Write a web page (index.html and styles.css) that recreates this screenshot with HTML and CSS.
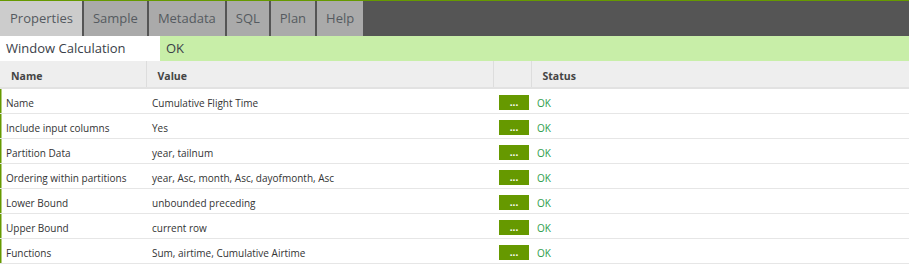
FILE: index.html
```html
<!DOCTYPE html>
<html lang="en">
<head>
    <meta charset="UTF-8">
    <title>Window Calculation</title>
    <link rel="stylesheet" href="styles.css">
</head>
<body>
    <div class="panel">
        <div class="tabs">
            <div class="tab active">Properties</div>
            <div class="tab">Sample</div>
            <div class="tab">Metadata</div>
            <div class="tab">SQL</div>
            <div class="tab">Plan</div>
            <div class="tab">Help</div>
        </div>

        <div class="title-row">
            <div class="title">Window Calculation</div>
            <div class="title-status">OK</div>
        </div>

        <table class="props">
            <colgroup>
                <col class="col-name">
                <col class="col-value">
                <col class="col-edit">
                <col>
            </colgroup>
            <thead>
                <tr>
                    <th>Name</th>
                    <th>Value</th>
                    <th></th>
                    <th>Status</th>
                </tr>
            </thead>
            <tbody>
                <tr>
                    <td>Name</td>
                    <td>Cumulative Flight Time</td>
                    <td class="btn-cell"><button class="edit">...</button></td>
                    <td class="ok">OK</td>
                </tr>
                <tr>
                    <td>Include input columns</td>
                    <td>Yes</td>
                    <td class="btn-cell"><button class="edit">...</button></td>
                    <td class="ok">OK</td>
                </tr>
                <tr>
                    <td>Partition Data</td>
                    <td>year, tailnum</td>
                    <td class="btn-cell"><button class="edit">...</button></td>
                    <td class="ok">OK</td>
                </tr>
                <tr>
                    <td>Ordering within partitions</td>
                    <td>year, Asc, month, Asc, dayofmonth, Asc</td>
                    <td class="btn-cell"><button class="edit">...</button></td>
                    <td class="ok">OK</td>
                </tr>
                <tr>
                    <td>Lower Bound</td>
                    <td>unbounded preceding</td>
                    <td class="btn-cell"><button class="edit">...</button></td>
                    <td class="ok">OK</td>
                </tr>
                <tr>
                    <td>Upper Bound</td>
                    <td>current row</td>
                    <td class="btn-cell"><button class="edit">...</button></td>
                    <td class="ok">OK</td>
                </tr>
                <tr>
                    <td>Functions</td>
                    <td>Sum, airtime, Cumulative Airtime</td>
                    <td class="btn-cell"><button class="edit">...</button></td>
                    <td class="ok">OK</td>
                </tr>
            </tbody>
        </table>
    </div>
</body>
</html>
```

FILE: styles.css
```css
body {
    margin: 0;
    font-family: 'Open Sans', 'Liberation Sans', sans-serif;
    background-color: #ffffff;
    color: #333333;
}

.panel {
    border-top: 1px solid #669900;
}

.tabs {
    display: flex;
    height: 35px;
    background-color: #555555;
}

.tab {
    display: flex;
    align-items: center;
    padding: 0 9px 1px;
    margin-right: 2px;
    background-color: #aaaaaa;
    color: #555a60;
    font-size: 13px;
}

.tab.active {
    padding-left: 10px;
    background-color: #cccccc;
}

.title-row {
    display: flex;
    height: 25px;
    font-size: 13px;
    line-height: 25px;
}

.title {
    width: 154px;
    padding-left: 6px;
    color: #3a4048;
    background-color: #ffffff;
}

.title-status {
    flex: 1;
    padding-left: 6px;
    background-color: #c8eea8;
    color: #3a4048;
}

.props {
    width: 100%;
    border-collapse: collapse;
    table-layout: fixed;
    font-size: 10px;
}

.col-name {
    width: 146px;
}

.col-value {
    width: 347px;
}

.col-edit {
    width: 38px;
}

.props th {
    height: 23px;
    padding: 3px 11px 0;
    text-align: left;
    font-size: 10.5px;
    font-weight: 700;
    color: #444444;
    background-color: #eeeeee;
    border-left: 1px solid #dddddd;
    border-bottom: 2px solid #e2e2e2;
}

.props th:first-child {
    border-left: none;
}

.props td {
    height: 21px;
    padding: 3px 6px 0;
    border-bottom: 1px solid #e6e6e6;
    white-space: nowrap;
}

.props td.btn-cell {
    padding-top: 0;
}

.props tbody td:first-child {
    box-shadow: inset 1.5px 0 0 #669900;
}

.props td.ok {
    color: #2e9e4a;
}

.edit {
    display: block;
    width: 30px;
    height: 15px;
    margin-top: 2px;
    padding: 0;
    border: none;
    background-color: #669900;
    color: #ffffff;
    font-family: inherit;
    font-size: 10px;
    font-weight: 700;
    line-height: 11px;
    cursor: pointer;
}
```
